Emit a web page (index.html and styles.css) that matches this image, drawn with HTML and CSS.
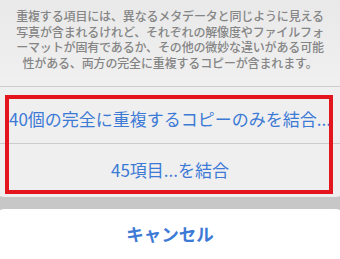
FILE: index.html
```html
<!DOCTYPE html>
<html lang="ja">
<head>
<meta charset="utf-8">
<link rel="stylesheet" href="styles.css">
</head>
<body>
<div class="screen">
  <div class="sheet">
    <div class="message">
      <div class="line">重複する項目には、異なるメタデータと同じように見える</div>
      <div class="line">写真が含まれるけれど、それぞれの解像度やファイルフォ</div>
      <div class="line">ーマットが固有であるか、その他の微妙な違いがある可能</div>
      <div class="line">性がある、両方の完全に重複するコピーが含まれます。</div>
    </div>
    <div class="action first">40個の完全に重複するコピーのみを結合...</div>
    <div class="action second">45項目...を結合</div>
  </div>
  <div class="cancel">キャンセル</div>
  <div class="highlight"></div>
</div>
</body>
</html>
```

FILE: styles.css
```css
html, body {
  margin: 0;
  padding: 0;
}
body {
  background: #c7c7c7;
  font-family: "Noto Sans CJK JP", "Noto Sans", sans-serif;
  width: 340px;
  height: 259px;
  overflow: hidden;
}
.screen {
  position: relative;
  width: 340px;
  height: 259px;
  overflow: hidden;
  display: flex;
  flex-direction: column;
}
.sheet {
  margin: 0 -8px;
  background: #efefef;
  border-radius: 0 0 13px 13px;
  display: flex;
  flex-direction: column;
}
.message {
  height: 87px;
  box-sizing: border-box;
  padding-top: 8px;
  background: linear-gradient(#e9e9e9, #f0f0f0);
  border-bottom: 1px solid #cdcdcd;
  display: flex;
  flex-direction: column;
  align-items: center;
}
.line {
  font-size: 12px;
  font-weight: 500;
  line-height: 15.7px;
  letter-spacing: -0.15px;
  color: #858585;
  white-space: nowrap;
}
.action {
  color: #3d7ad6;
  font-size: 17px;
  text-align: center;
  white-space: nowrap;
  display: flex;
  align-items: center;
  justify-content: center;
}
.first {
  height: 57px;
  padding-top: 6px;
  box-sizing: border-box;
  border-bottom: 1px solid #cbcbcb;
}
.second {
  height: 53px;
  padding-bottom: 2px;
  box-sizing: border-box;
}
.cancel {
  margin: 12px -8px 0;
  height: 60px;
  background: #ffffff;
  border-radius: 13px 13px 0 0;
  color: #3d7ad6;
  font-size: 17.5px;
  font-weight: 700;
  text-align: center;
  line-height: 50px;
}
.highlight {
  position: absolute;
  left: 5px;
  top: 95px;
  width: 320px;
  height: 91px;
  border: 4.5px solid #e3151d;
}
```
